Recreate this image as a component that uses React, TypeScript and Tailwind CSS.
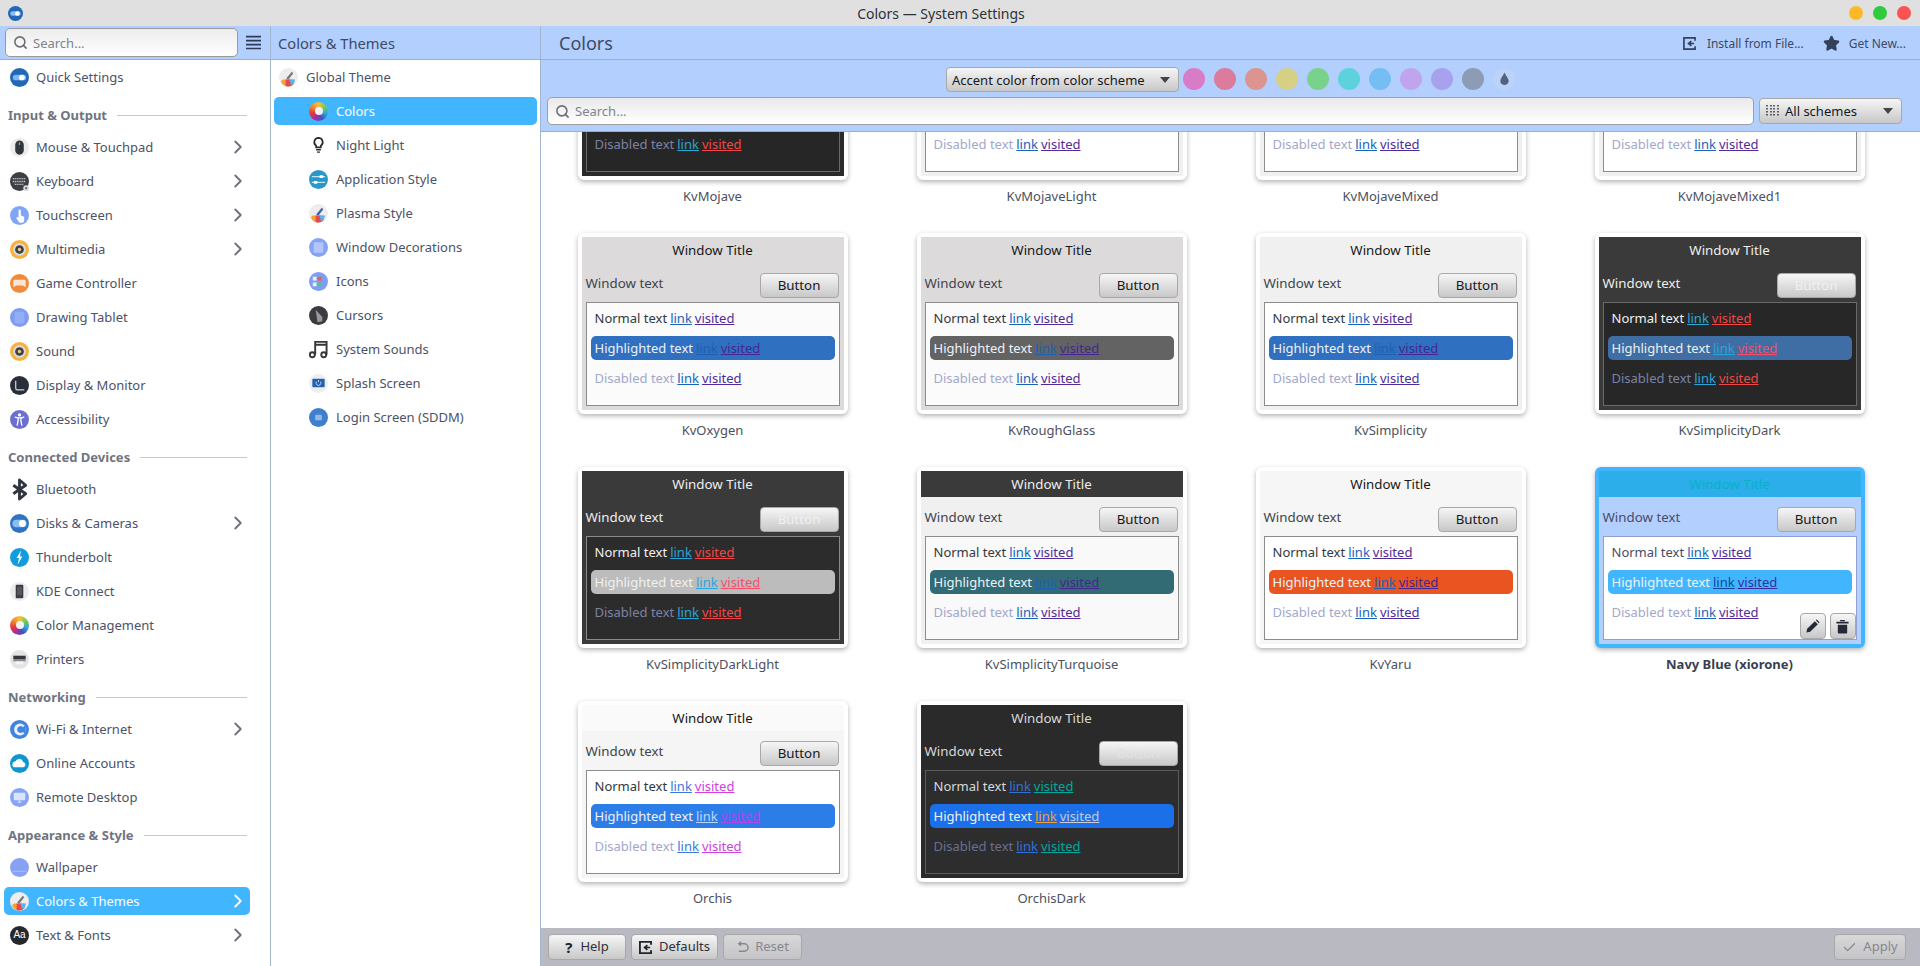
import { ChevronRight, Search, Star, Check } from "lucide-react";

type IconName =
  | "toggle" | "mouse" | "keyboard" | "touch" | "media" | "game" | "tablet" | "display" | "access"
  | "bluetooth" | "disks" | "bolt" | "phone" | "wheel" | "printer" | "wifi" | "cloud" | "remote"
  | "wallpaper" | "brush" | "fonts" | "bulb" | "sliders" | "plasma" | "deco" | "icons" | "cursor"
  | "music" | "splash" | "login";

function Icon({ name }: { name: IconName }) {
  if (name === "wheel") {
    return (
      <div className="w-[19px] h-[19px] shrink-0 rounded-full bg-[conic-gradient(#f5c33b,#7ecb4a,#2fa8d8,#4a4fc0,#a02fa0,#e8383c,#f08a30,#f5c33b)] flex items-center justify-center">
        <div className="w-[8px] h-[8px] rounded-full bg-[#f2f2f2]" />
      </div>
    );
  }
  if (name === "fonts") {
    return (
      <div className="w-[19px] h-[19px] shrink-0 rounded-full bg-[#26282c] flex items-center justify-center text-[10px] leading-none text-white font-['Liberation_Sans',sans-serif]">
        Aa
      </div>
    );
  }
  return (
    <svg viewBox="0 0 20 20" className="w-[19px] h-[19px] shrink-0 overflow-visible">
      {name === "toggle" && (
        <>
          <circle cx="10" cy="10" r="10" fill="#2268b8" />
          <rect x="3" y="7" width="14" height="6" rx="3" fill="#7fb4ec" />
          <circle cx="12.5" cy="10" r="3" fill="#fff" />
        </>
      )}
      {name === "disks" && (
        <>
          <circle cx="10" cy="10" r="10" fill="#2f74c4" />
          <rect x="2.5" y="6" width="15" height="8" rx="4" fill="#8cbcf0" />
          <circle cx="13" cy="10" r="3.6" fill="#fff" />
        </>
      )}
      {name === "mouse" && (
        <>
          <circle cx="10" cy="10" r="10" fill="#ececec" />
          <rect x="5.5" y="2.5" width="9" height="15" rx="4.5" fill="#33363a" />
          <rect x="9.2" y="4.5" width="1.6" height="3" rx="0.8" fill="#2fc4c0" />
        </>
      )}
      {name === "keyboard" && (
        <>
          <circle cx="10" cy="10" r="10" fill="#3c3f44" />
          <path d="M3 7h14M3 10h14M5 13h10" stroke="#e8e8e8" strokeWidth="1.4" strokeDasharray="1 1" />
          <circle cx="17" cy="17" r="3" fill="#dadada" />
          <circle cx="17" cy="17" r="1.2" fill="#666" />
        </>
      )}
      {name === "touch" && (
        <>
          <circle cx="10" cy="10" r="10" fill="#7fa6f5" />
          <path d="M9 5a1.2 1.2 0 0 1 2.4 0v5l3.5 1.2v4.3a2 2 0 0 1-2 2H10L6.5 12.5l1-1L9 12.4z" fill="#fff" />
        </>
      )}
      {name === "media" && (
        <>
          <circle cx="10" cy="10" r="10" fill="#f8b23c" />
          <circle cx="10" cy="10" r="6.6" fill="#d9dce0" />
          <circle cx="10" cy="10" r="4.6" fill="#47403a" />
          <circle cx="10" cy="10" r="1.8" fill="#d8c8a0" />
        </>
      )}
      {name === "game" && (
        <>
          <circle cx="10" cy="10" r="10" fill="#f28a3c" />
          <path d="M5 6h10a1.5 1.5 0 0 1 1.5 1.5V14l-3-2h-7l-3 2V7.5A1.5 1.5 0 0 1 5 6z" fill="#fbe6d6" />
        </>
      )}
      {name === "tablet" && (
        <>
          <circle cx="10" cy="10" r="10" fill="#7f9cf3" />
          <rect x="5" y="4" width="10" height="12" rx="1" fill="#93aef7" />
        </>
      )}
      {name === "display" && (
        <>
          <circle cx="10" cy="10" r="10" fill="#2a2e3a" />
          <path d="M6 5v8a1.5 1.5 0 0 0 1.5 1.5H15" stroke="#cfd3dc" strokeWidth="1.3" fill="none" />
        </>
      )}
      {name === "access" && (
        <>
          <circle cx="10" cy="10" r="10" fill="#6b6fcf" />
          <circle cx="10" cy="5.2" r="1.7" fill="#fff" />
          <path d="M5 7.5l3.5.8v3.2L7.5 16.5M15 7.5l-3.5.8v3.2l1 5M8.5 8.3h3" stroke="#fff" strokeWidth="1.4" fill="none" />
        </>
      )}
      {name === "bluetooth" && (
        <path d="M3.5 5.5l13 9-6.500 5.500V0l6.500 5.500-13 9" stroke="#30343e" strokeWidth="3" fill="none" strokeLinejoin="round" />
      )}
      {name === "bolt" && (
        <>
          <circle cx="10" cy="10" r="10" fill="#139be0" />
          <path d="M11.5 2.5L7 10.5h2.5L8 17.5l5-8.500h-2.500z" fill="#fff" />
        </>
      )}
      {name === "phone" && (
        <>
          <circle cx="10" cy="10" r="10" fill="#ececec" />
          <rect x="6" y="3" width="8" height="14" rx="1" fill="#3a3c40" />
          <rect x="7.5" y="5" width="5" height="9" fill="#55585e" />
        </>
      )}
      {name === "printer" && (
        <>
          <circle cx="10" cy="10" r="10" fill="#e4e4e4" />
          <rect x="3.5" y="6" width="13" height="4" fill="#34373c" />
          <rect x="3.5" y="10" width="13" height="2" fill="#8a8c90" />
          <rect x="6" y="12" width="8" height="3" fill="#f5f5f5" />
        </>
      )}
      {name === "wifi" && (
        <>
          <circle cx="10" cy="10" r="10" fill="#3f85e0" />
          <circle cx="10.5" cy="10" r="6.2" fill="#e8f0ff" />
          <path d="M7.5 10a3.5 3.5 0 0 1 6-2.5l3-2.500V15l-3-2.500A3.5 3.5 0 0 1 7.5 10z" fill="#3f85e0" />
        </>
      )}
      {name === "cloud" && (
        <>
          <circle cx="10" cy="10" r="10" fill="#0f96d0" />
          <path d="M5.5 14a3 3 0 0 1 0-6 4.5 4.5 0 0 1 8.500.7 2.7 2.7 0 0 1 .2 5.300z" fill="#fff" />
        </>
      )}
      {name === "remote" && (
        <>
          <circle cx="10" cy="10" r="10" fill="#84a4f5" />
          <rect x="4" y="5" width="12" height="8" rx="0.8" fill="#d9e4ff" />
          <path d="M8 15h4M10 13v2" stroke="#d9e4ff" strokeWidth="1.2" />
        </>
      )}
      {name === "wallpaper" && (
        <>
          <circle cx="10" cy="10" r="10" fill="#87a2f5" />
          <path d="M3 14h14" stroke="#a9bdf8" strokeWidth="1.2" />
        </>
      )}
      {(name === "brush" || name === "plasma") && (
        <>
          <circle cx="10" cy="10" r="10" fill="#ededed" />
          <path d="M2 14a8 8 0 0 0 14 2l-1-4H4z" fill="#f6a03a" />
          <path d="M7 12h5l2.500 6A8 8 0 0 1 7 19z" fill="#e8484c" />
          <path d="M11 12h6l-1.500 4.500-3 1.500z" fill="#5cb0ec" />
          <path d="M7.5 11l6-7 1.500 1.500L10 12z" fill={name === "plasma" ? "#3a5fb0" : "#777"} />
        </>
      )}
      {name === "bulb" && (
        <>
          <path d="M10 2a4.500 4.500 0 0 0-2.500 8.200V12h5v-1.800A4.500 4.500 0 0 0 10 2z" fill="none" stroke="#262a33" strokeWidth="1.800" />
          <path d="M7.5 14.500h5M8.500 17h3" stroke="#262a33" strokeWidth="1.500" />
        </>
      )}
      {name === "sliders" && (
        <>
          <circle cx="10" cy="10" r="10" fill="#2a97c9" />
          <path d="M3 7h14M3 13h14" stroke="#bfe3f3" strokeWidth="1.2" />
          <rect x="11" y="5.5" width="4" height="3" rx="1" fill="#fff" />
          <rect x="5" y="11.5" width="4" height="3" rx="1" fill="#fff" />
        </>
      )}
      {name === "deco" && (
        <>
          <circle cx="10" cy="10" r="10" fill="#86a3f6" />
          <rect x="5" y="4.5" width="10" height="11" rx="1" fill="#b3c6fb" />
        </>
      )}
      {name === "icons" && (
        <>
          <circle cx="10" cy="10" r="10" fill="#7f9df5" />
          <rect x="4" y="5" width="4" height="4" fill="#eaf0ff" />
          <rect x="9" y="5" width="4" height="4" fill="#e8604c" />
          <rect x="4" y="11" width="4" height="4" fill="#eaf0ff" />
          <rect x="9" y="11" width="4" height="4" fill="#56c08a" />
        </>
      )}
      {name === "cursor" && (
        <>
          <circle cx="10" cy="10" r="10" fill="#3a3c40" />
          <path d="M7 4l7 7.500v4.500l-5 1z" fill="#9a9a9e" />
        </>
      )}
      {name === "music" && (
        <>
          <path d="M6.5 15.500V2h12v13.500M6.500 5h12" stroke="#34373c" strokeWidth="2" fill="none" />
          <circle cx="3.5" cy="15.5" r="2.6" fill="none" stroke="#34373c" strokeWidth="2" />
          <circle cx="15.5" cy="15.5" r="2.6" fill="none" stroke="#34373c" strokeWidth="2" />
        </>
      )}
      {name === "splash" && (
        <>
          <circle cx="10" cy="10" r="10" fill="#eeeeee" />
          <rect x="3.5" y="5" width="13" height="9" rx="1" fill="#2263ad" />
          <path d="M8 8a2.500 2.500 0 1 0 4 0M10 6.500v2" stroke="#cfe2fa" strokeWidth="0.9" fill="none" />
        </>
      )}
      {name === "login" && (
        <>
          <circle cx="10" cy="10" r="10" fill="#3f7fd0" />
          <rect x="6.5" y="7" width="7" height="6" rx="1" fill="#9ab8df" />
        </>
      )}
    </svg>
  );
}

type SideItem = { label: string; icon: IconName; more?: boolean; active?: boolean };
type SideGroup = { title?: string; items: SideItem[] };

const sideGroups: SideGroup[] = [
  { items: [{ label: "Quick Settings", icon: "toggle" }] },
  {
    title: "Input & Output",
    items: [
      { label: "Mouse & Touchpad", icon: "mouse", more: true },
      { label: "Keyboard", icon: "keyboard", more: true },
      { label: "Touchscreen", icon: "touch", more: true },
      { label: "Multimedia", icon: "media", more: true },
      { label: "Game Controller", icon: "game" },
      { label: "Drawing Tablet", icon: "tablet" },
      { label: "Sound", icon: "media" },
      { label: "Display & Monitor", icon: "display" },
      { label: "Accessibility", icon: "access" },
    ],
  },
  {
    title: "Connected Devices",
    items: [
      { label: "Bluetooth", icon: "bluetooth" },
      { label: "Disks & Cameras", icon: "disks", more: true },
      { label: "Thunderbolt", icon: "bolt" },
      { label: "KDE Connect", icon: "phone" },
      { label: "Color Management", icon: "wheel" },
      { label: "Printers", icon: "printer" },
    ],
  },
  {
    title: "Networking",
    items: [
      { label: "Wi-Fi & Internet", icon: "wifi", more: true },
      { label: "Online Accounts", icon: "cloud" },
      { label: "Remote Desktop", icon: "remote" },
    ],
  },
  {
    title: "Appearance & Style",
    items: [
      { label: "Wallpaper", icon: "wallpaper" },
      { label: "Colors & Themes", icon: "brush", more: true, active: true },
      { label: "Text & Fonts", icon: "fonts", more: true },
    ],
  },
];

const subItems: { label: string; icon: IconName }[] = [
  { label: "Night Light", icon: "bulb" },
  { label: "Application Style", icon: "sliders" },
  { label: "Plasma Style", icon: "plasma" },
  { label: "Window Decorations", icon: "deco" },
  { label: "Icons", icon: "icons" },
  { label: "Cursors", icon: "cursor" },
  { label: "System Sounds", icon: "music" },
  { label: "Splash Screen", icon: "splash" },
  { label: "Login Screen (SDDM)", icon: "login" },
];

const swatches = [
  "bg-[#d97cc8]", "bg-[#dc7c9c]", "bg-[#dc9490]", "bg-[#d6d084]", "bg-[#79d28c]", "bg-[#5ed2dc]",
  "bg-[#74bef4]", "bg-[#c0a4ee]", "bg-[#a8a2ee]", "bg-[#8c9cb4]",
];

type Scheme = {
  name: string;
  win: string;
  title: string;
  titleText: string;
  winText: string;
  btnText: string;
  view: string;
  frame: string;
  normal: string;
  link: string;
  visited: string;
  hi: string;
  hiText: string;
  hiLink: string;
  hiVisited: string;
  disabled: string;
  disLink: string;
  disVisited: string;
  current?: boolean;
};

const lightBase = {
  titleText: "text-[#16181c]",
  winText: "text-[#40444c]",
  btnText: "text-[#16181c]",
  frame: "border-[#8c8c8c]",
  normal: "text-[#34383f]",
  link: "text-[#1763bd]",
  visited: "text-[#4f2a98]",
  hiText: "text-[#eef2f8]",
  hiLink: "text-[#1b62b4]",
  hiVisited: "text-[#45278f]",
  disabled: "text-[#a2a8cc]",
  disLink: "text-[#1763bd]",
  disVisited: "text-[#4f2a98]",
};

const darkBase = {
  titleText: "text-[#eeeeee]",
  winText: "text-[#eeeeee]",
  btnText: "text-[#f0f0f0]",
  normal: "text-[#f0f0f0]",
  link: "text-[#2ba6d8]",
  visited: "text-[#f04848]",
  hiText: "text-[#f0f0f0]",
  hiLink: "text-[#2ba6d8]",
  hiVisited: "text-[#f2506a]",
  disabled: "text-[#7c82a4]",
  disLink: "text-[#2ba6d8]",
  disVisited: "text-[#f04848]",
};

const schemes: Scheme[] = [
  { ...darkBase, name: "KvMojave", win: "bg-[#2a2a2a]", title: "bg-[#2a2a2a]", view: "bg-[#262626]", frame: "border-[#6a6a6a]", hi: "bg-[#2f70c0]" },
  { ...lightBase, name: "KvMojaveLight", win: "bg-[#f0f0f0]", title: "bg-[#f0f0f0]", view: "bg-white", hi: "bg-[#2f70c0]" },
  { ...lightBase, name: "KvMojaveMixed", win: "bg-[#f0f0f0]", title: "bg-[#f0f0f0]", view: "bg-white", hi: "bg-[#2f70c0]" },
  { ...lightBase, name: "KvMojaveMixed1", win: "bg-[#f0f0f0]", title: "bg-[#f0f0f0]", view: "bg-white", hi: "bg-[#2f70c0]" },
  { ...lightBase, name: "KvOxygen", win: "bg-[#dcdada]", title: "bg-[#dcdada]", view: "bg-[#fbfbfb]", hi: "bg-[#2f70c0]" },
  { ...lightBase, name: "KvRoughGlass", win: "bg-[#dcdada]", title: "bg-[#dcdada]", view: "bg-[#fbfbfb]", hi: "bg-[#636363]" },
  { ...lightBase, name: "KvSimplicity", win: "bg-[#f0f0f0]", title: "bg-[#f0f0f0]", view: "bg-white", hi: "bg-[#2f70c0]" },
  { ...darkBase, name: "KvSimplicityDark", win: "bg-[#3a3a3a]", title: "bg-[#3a3a3a]", view: "bg-[#272727]", frame: "border-[#6a6a6a]", hi: "bg-[#3f6ea5]" },
  { ...darkBase, name: "KvSimplicityDarkLight", win: "bg-[#3a3a3a]", title: "bg-[#3a3a3a]", view: "bg-[#2c2c2c]", frame: "border-[#8a8a8a]", hi: "bg-[#bcbcbc]" },
  { ...lightBase, name: "KvSimplicityTurquoise", win: "bg-[#f0f0f0]", title: "bg-[#3a3a3a]", titleText: "text-[#eeeeee]", view: "bg-[#f9f9f9]", hi: "bg-[#336b75]" },
  { ...lightBase, name: "KvYaru", win: "bg-[#f6f6f6]", title: "bg-[#f6f6f6]", view: "bg-white", hi: "bg-[#e95420]" },
  {
    ...lightBase, name: "Navy Blue (xiorone)", win: "bg-[#b3cffd]", title: "bg-[#2caeea]", titleText: "text-[#06b2c6]", winText: "text-[#474c68]",
    view: "bg-white", frame: "border-[#8f9fd0]", normal: "text-[#474c68]", hi: "bg-[#41b6ff]", hiLink: "text-[#0c4a98]", hiVisited: "text-[#3b2a9e]", current: true,
  },
  {
    ...lightBase, name: "Orchis", win: "bg-[#f5f5f5]", title: "bg-[#fafafa]", view: "bg-white", hi: "bg-[#2d7de9]", link: "text-[#3c78dc]", visited: "text-[#d040e0]",
    hiLink: "text-[#bcd8ff]", hiVisited: "text-[#a848f0]", disLink: "text-[#3c78dc]", disVisited: "text-[#d040e0]",
  },
  {
    ...darkBase, name: "OrchisDark", win: "bg-[#2a2a2a]", title: "bg-[#2a2a2a]", titleText: "text-[#d8d8d8]", winText: "text-[#d8d8d8]", btnText: "text-[#e2e2e2]",
    view: "bg-[#2d2d2d]", frame: "border-[#5a5a5a]", normal: "text-[#d8d8d8]", link: "text-[#3470d8]", visited: "text-[#00a8a0]", hi: "bg-[#1b6fe8]", hiLink: "text-[#f0a030]",
    hiVisited: "text-[#c8ccd8]", disabled: "text-[#6a7090]", disLink: "text-[#3470d8]", disVisited: "text-[#00a8a0]",
  },
];

const btn = "bg-gradient-to-b from-[#f6f6f6] to-[#c8c8c8] border border-[#a8a8a8] rounded-[4px]";

function Caret() {
  return (
    <svg viewBox="0 0 10 6" className="w-[10px] h-[6px] shrink-0">
      <path d="M0 0h10L5 6z" fill="#444" />
    </svg>
  );
}

function SchemeCard({ s }: { s: Scheme }) {
  return (
    <div className="h-[234px] flex flex-col items-center pt-[1px]">
      <div className={`w-[270px] h-[181px] p-1 rounded-[6px] shadow-[0_2px_5px_rgba(0,0,0,0.3)] ${s.current ? "bg-[#41b6ff]" : "bg-white"}`}>
        <div className={`h-full flex flex-col ${s.win}`}>
          <div className={`h-[26px] pt-[2px] shrink-0 flex items-center justify-center ${s.title} ${s.titleText}`}>Window Title</div>
          <div className="shrink-0 flex justify-between pl-1 pr-[5px] pt-[10px]">
            <span className={`mt-[1px] ${s.winText}`}>Window text</span>
            <div className={`w-[79px] h-[25px] flex items-center justify-center ${btn} ${s.btnText}`}>Button</div>
          </div>
          <div className={`relative flex-1 mx-1 mb-1 mt-[4px] border pt-[3px] px-1 flex flex-col gap-[6px] text-[13px] ${s.frame} ${s.view}`}>
            <div className={`h-6 pl-1 pt-[2px] flex items-center gap-[3px] ${s.normal}`}>
              <span>Normal text</span>
              <span className={`underline ${s.link}`}>link</span>
              <span className={`underline ${s.visited}`}>visited</span>
            </div>
            <div className={`h-6 pl-1 pt-[2px] rounded-[5px] flex items-center gap-[3px] ${s.hi} ${s.hiText}`}>
              <span>Highlighted text</span>
              <span className={`underline ${s.hiLink}`}>link</span>
              <span className={`underline ${s.hiVisited}`}>visited</span>
            </div>
            <div className={`h-6 pl-1 pt-[2px] flex items-center gap-[3px] ${s.disabled}`}>
              <span>Disabled text</span>
              <span className={`underline ${s.disLink}`}>link</span>
              <span className={`underline ${s.disVisited}`}>visited</span>
            </div>
            {s.current && (
              <div className="absolute right-0 bottom-0 flex gap-[4px]">
                <div className={`w-[26px] h-[26px] flex items-center justify-center ${btn}`}>
                  <svg viewBox="0 0 16 16" className="w-[15px] h-[15px]">
                    <path d="M1.5 14.500l.8-4L10.500 2.300l3.200 3.200-8.200 8.200z" fill="#232938" />
                    <path d="M11.5 1.300l1-.8 3 3-.8 1z" fill="#232938" />
                  </svg>
                </div>
                <div className={`w-[26px] h-[26px] flex items-center justify-center ${btn}`}>
                  <svg viewBox="0 0 16 16" className="w-[15px] h-[15px]">
                    <path d="M1.5 3h13v1.800h-13zM5.500 1h5v1.500h-5zM3 6h10v8.500a1 1 0 0 1-1 1H4a1 1 0 0 1-1-1z" fill="#232938" />
                  </svg>
                </div>
              </div>
            )}
          </div>
        </div>
      </div>
      <div className={`mt-[7px] text-[13px] ${s.current ? "font-bold text-[#3a3f50]" : "text-[#4c5160]"}`}>{s.name}</div>
    </div>
  );
}

function SideRow({ item }: { item: SideItem }) {
  return (
    <div className="h-[34px] py-[3px] ml-1 mr-5">
      <div className={`h-7 rounded-[5px] pl-[6px] pr-[1px] flex items-center gap-[7px] ${item.active ? "bg-[#41b6ff] text-white" : ""}`}>
        <Icon name={item.icon} />
        <span className="flex-1 pt-[2px]">{item.label}</span>
        {item.more && <ChevronRight size={22} strokeWidth={2} className={item.active ? "text-white" : "text-[#6b707e]"} />}
      </div>
    </div>
  );
}

export default function App() {
  return (
    <div className="w-[1920px] h-[966px] overflow-hidden flex flex-col bg-white text-[13px] text-[#4c5268] font-['Noto_Sans','Liberation_Sans',sans-serif]">
      {/* title bar */}
      <div className="h-[26px] shrink-0 bg-[#e0e0e0] flex items-center pl-[8px] pr-[9px]">
        <svg viewBox="0 0 20 20" className="w-[15px] h-[15px]">
          <circle cx="10" cy="10" r="10" fill="#2268b8" />
          <rect x="3" y="7" width="14" height="6" rx="3" fill="#8cbcf0" />
          <circle cx="12.5" cy="10" r="3" fill="#fff" />
        </svg>
        <div className="flex-1 text-center text-[14px] text-[#2e3138] pl-[10px]">Colors — System Settings</div>
        <div className="flex gap-[10px]">
          <div className="w-[14px] h-[14px] rounded-full bg-[#fbb829]" />
          <div className="w-[14px] h-[14px] rounded-full bg-[#2ecb3e]" />
          <div className="w-[14px] h-[14px] rounded-full bg-[#fb5252]" />
        </div>
      </div>

      <div className="flex-1 min-h-0 flex">
        {/* main sidebar */}
        <div className="w-[271px] shrink-0 border-r border-[#a2b5d0] flex flex-col">
          <div className="h-[34px] shrink-0 bg-[#b3cffd] border-b border-[#96aedb] flex items-center pl-[5px]">
            <div className="w-[233px] h-[29px] rounded-[5px] border border-[#9a9a9a] bg-gradient-to-b from-[#ececec] to-white flex items-center pl-[7px] gap-[5px] text-[#80838c]">
              <Search size={15} strokeWidth={2.5} className="text-[#6b6e76]" />
              <span className="pt-[2px]">Search...</span>
            </div>
            <svg viewBox="0 0 14 14" className="w-[15px] h-[15px] ml-2">
              <path d="M0 1.500h14M0 5.200h14M0 8.900h14M0 12.600h14" stroke="#2e3a58" strokeWidth="1.6" />
            </svg>
          </div>
          {sideGroups.map((g, i) => (
            <div key={i}>
              {g.title && (
                <div className="h-[36px] pt-[6px] pl-2 pr-[23px] flex items-center gap-[10px]">
                  <span className="font-bold text-[#70747f] pt-[2px]">{g.title}</span>
                  <div className="flex-1 h-px bg-[#c4c9d4]" />
                </div>
              )}
              {g.items.map((item) => (
                <SideRow key={item.label} item={item} />
              ))}
            </div>
          ))}
        </div>

        {/* sub-category column */}
        <div className="w-[270px] shrink-0 border-r border-[#a2b5d0] flex flex-col">
          <div className="h-[34px] shrink-0 bg-[#b3cffd] border-b border-[#96aedb] pt-[2px] flex items-center pl-[7px] text-[14.7px] text-[#3d4a66]">
            Colors &amp; Themes
          </div>
          <div className="h-[34px] pl-2 flex items-center gap-[8px]">
            <Icon name="brush" />
            <span className="pt-[2px]">Global Theme</span>
          </div>
          <div className="h-[34px] py-[3px] mx-[3px]">
            <div className="h-7 rounded-[5px] bg-[#41b6ff] text-white pl-[35px] flex items-center gap-[8px]">
              <Icon name="wheel" />
              <span className="pt-[2px]">Colors</span>
            </div>
          </div>
          {subItems.map((item) => (
            <div key={item.label} className="h-[34px] pl-[38px] flex items-center gap-[8px]">
              <Icon name={item.icon} />
              <span className="pt-[2px]">{item.label}</span>
            </div>
          ))}
        </div>

        {/* content */}
        <div className="flex-1 min-w-0 flex flex-col">
          <div className="h-[34px] shrink-0 bg-[#b3cffd] border-b border-[#96aedb] pt-[2px] flex items-center pl-[18px] pr-[14px] text-[12px] text-[#3d4a66]">
            <span className="flex-1 text-[18px]">Colors</span>
            <svg viewBox="0 0 14 14" className="w-[13px] h-[13px] mr-[11px]">
              <path d="M13 4V1H1v12h12v-3" fill="none" stroke="#34405c" strokeWidth="1.8" />
              <path d="M12 7H7M9 4.500L6 7l3 2.500" fill="none" stroke="#34405c" strokeWidth="1.8" />
            </svg>
            <span>Install from File...</span>
            <Star size={17} fill="#34405c" stroke="#34405c" className="ml-[19px] mr-[9px]" />
            <span>Get New...</span>
          </div>

          <div className="h-[72px] shrink-0 bg-[#b3cffd] border-b border-[#96aedb] pt-[7px]">
            <div className="flex justify-center gap-[9px]">
              <div className={`w-[233px] h-[25px] -mr-[5px] flex items-center pl-[5px] pr-[8px] text-[#16181c] ${btn}`}>
                <span className="flex-1 pt-[2px]">Accent color from color scheme</span>
                <Caret />
              </div>
              {swatches.map((c) => (
                <div key={c} className={`w-[22px] h-[22px] mt-[1px] rounded-full ${c}`} />
              ))}
              <div className="w-[22px] h-[22px] mt-[1px] rounded-full bg-[#bcd2f6] flex items-center justify-center">
                <svg viewBox="0 0 12 14" className="w-[11px] h-[14px]">
                  <path d="M6 0C5 3 1.500 6 1.500 9a4.500 4.500 0 0 0 9 0C10.500 6 7 3 6 0z" fill="#4f6484" />
                </svg>
              </div>
            </div>
            <div className="flex items-center gap-[5px] pl-[6px] pr-[18px] mt-[5px]">
              <div className="flex-1 h-7 rounded-[5px] border border-[#a0a0a0] bg-gradient-to-b from-[#e9e9e9] to-white flex items-center pl-[7px] gap-[5px] text-[#80838c]">
                <Search size={15} strokeWidth={2.5} className="text-[#6b6e76]" />
                <span className="pt-[2px]">Search...</span>
              </div>
              <div className={`w-[143px] h-[26px] flex items-center pl-[6px] pr-[8px] gap-[5px] text-[#16181c] ${btn}`}>
                <svg viewBox="0 0 14 14" className="w-[14px] h-[14px]">
                  <path d="M1 1v12M5 1v12M8 1v12M12 1v12" stroke="#30343c" strokeWidth="1.5" strokeDasharray="1.5 1.5" />
                </svg>
                <span className="flex-1 pt-[2px]">All schemes</span>
                <Caret />
              </div>
            </div>
          </div>

          {/* scrolled scheme grid */}
          <div className="flex-1 min-h-0 overflow-hidden">
            <div className="-mt-[134px] pl-[2px] pr-[21px] grid grid-cols-4 text-[13.3px]">
              {schemes.map((s) => (
                <SchemeCard key={s.name} s={s} />
              ))}
            </div>
          </div>

          <div className="h-[38px] shrink-0 bg-[#b9b9c1] flex items-center pl-[7px] pr-[14px] gap-[5px] text-[#2e3138]">
            <div className={`w-[78px] h-[26px] flex items-center justify-center gap-[8px] ${btn}`}>
              <span className="font-bold text-[15px] leading-none text-[#20242c]">?</span>
              <span>Help</span>
            </div>
            <div className={`w-[87px] h-[26px] flex items-center justify-center gap-[7px] ${btn}`}>
              <svg viewBox="0 0 14 14" className="w-[13px] h-[13px]">
                <path d="M13 4V1H1v12h12v-3" fill="none" stroke="#20242c" strokeWidth="2" />
                <path d="M12 7H7M9 4.500L6 7l3 2.500" fill="none" stroke="#20242c" strokeWidth="1.8" />
              </svg>
              <span>Defaults</span>
            </div>
            <div className="w-[79px] h-[26px] flex items-center justify-center gap-[6px] rounded-[4px] border border-[#a8a8a8] bg-gradient-to-b from-[#d8d8d8] to-[#c4c4c8] text-[#85878e]">
              <svg viewBox="0 0 14 14" className="w-[13px] h-[13px]">
                <path d="M3 3h6a4 4 0 0 1 0 8H3M5.500 .8L3 3l2.500 2.200" fill="none" stroke="#85878e" strokeWidth="1.5" />
              </svg>
              <span>Reset</span>
            </div>
            <div className="flex-1" />
            <div className="w-[72px] h-[26px] flex items-center justify-center gap-[6px] rounded-[4px] border border-[#a8a8a8] bg-gradient-to-b from-[#d8d8d8] to-[#c4c4c8] text-[#85878e]">
              <Check size={15} strokeWidth={2} />
              <span>Apply</span>
            </div>
          </div>
        </div>
      </div>
    </div>
  );
}
